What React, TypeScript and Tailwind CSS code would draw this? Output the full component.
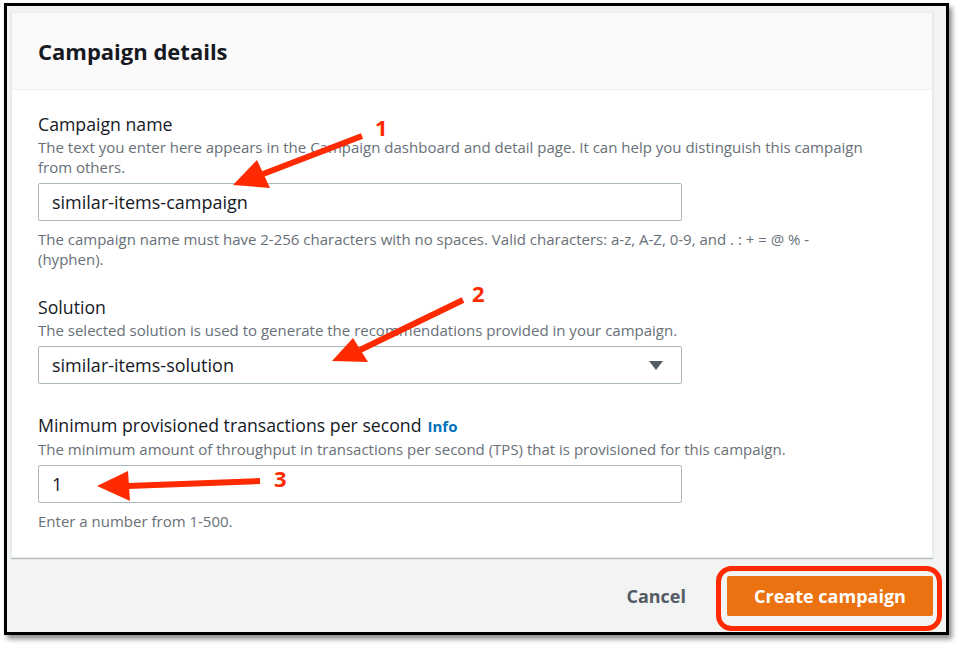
const font = { fontFamily: '"Open Sans", "Noto Sans", sans-serif' };

const Field = ({
  label,
  info,
  desc,
  children,
  hint,
}: {
  label: string;
  info?: boolean;
  desc: string;
  children: React.ReactNode;
  hint?: string;
}) => (
  <div>
    <div className="text-[17.7px] leading-[22px] text-[#16191f]">
      {label}
      {info && <span className="ml-[6px] text-[15px] font-bold text-[#0073bb]">Info</span>}
    </div>
    <p className="mt-[2px] w-[832px] text-[15px] leading-[20px] text-[#687078]">{desc}</p>
    <div className="mt-[6px]">{children}</div>
    {hint && <p className="mt-[8px] w-[832px] text-[15px] leading-[20px] text-[#687078]">{hint}</p>}
  </div>
);

const Input = ({ value, select }: { value: string; select?: boolean }) => (
  <div className="flex h-[38px] w-[644px] items-center justify-between rounded-[2px] border border-[#aab7b8] bg-white pl-[13px] pr-[18px]">
    <span className="text-[18px] text-[#16191f]">{value}</span>
    {select && (
      <svg width="14" height="9" viewBox="0 0 14 9">
        <path d="M0 0 H14 L7 9 Z" fill="#545b64" />
      </svg>
    )}
  </div>
);

export default function App() {
  return (
    <div className="relative h-[650px] w-[960px] bg-white" style={font}>
      {/* framed screenshot */}
      <div className="ml-[4px] mt-[3px] h-[632px] w-[945px] border-[3px] border-black bg-[#f2f3f3] pl-[4px] pt-[6px] shadow-[3px_4px_5px_rgba(0,0,0,0.45)]">
        <div className="w-[922px] border border-[#eaeded] bg-white shadow-[0_1px_1px_rgba(0,28,36,0.25)]">
          <div className="flex h-[77px] items-center border-b border-[#eaeded] bg-[#fafafa] pl-[26px]">
            <h2 className="text-[22px] font-bold text-[#16191f]">Campaign details</h2>
          </div>

          <div className="px-[26px] pb-[26px] pt-[23px]">
            <Field
              label="Campaign name"
              desc="The text you enter here appears in the Campaign dashboard and detail page. It can help you distinguish this campaign from others."
              hint="The campaign name must have 2-256 characters with no spaces. Valid characters: a-z, A-Z, 0-9, and . : + = @ % - (hyphen)."
            >
              <Input value="similar-items-campaign" />
            </Field>

            <div className="mt-[27px]">
              <Field
                label="Solution"
                desc="The selected solution is used to generate the recommendations provided in your campaign."
              >
                <Input value="similar-items-solution" select />
              </Field>
            </div>

            <div className="mt-[30px]">
              <Field
                label="Minimum provisioned transactions per second"
                info
                desc="The minimum amount of throughput in transactions per second (TPS) that is provisioned for this campaign."
                hint="Enter a number from 1-500."
              >
                <Input value="1" />
              </Field>
            </div>
          </div>
        </div>

        {/* footer actions */}
        <div className="flex w-[922px] items-center justify-end pt-[18px]">
          <button className="mr-[41px] text-[18px] font-bold text-[#545b64]">Cancel</button>
          <button className="h-[40px] w-[206px] rounded-[2px] bg-[#ec7211] text-[18px] font-bold text-white">
            Create campaign
          </button>
        </div>
      </div>

      {/* red annotations */}
      <svg className="pointer-events-none absolute left-0 top-0" width="960" height="650">
        <g stroke="#ff2a00" strokeWidth="6" strokeLinecap="butt" fill="#ff2a00">
          <line x1="362" y1="133" x2="263" y2="171" />
          <polygon points="233,182 257,157 270,185" stroke="none" />
          <line x1="463" y1="297" x2="360" y2="347" />
          <polygon points="332,358 353,335 368,359" stroke="none" />
          <line x1="260" y1="478" x2="128" y2="483" />
          <polygon points="97,483 128,468 130,498" stroke="none" />
        </g>
        <g fill="#ff2a00" fontSize="22" fontWeight="700" style={font}>
          <text x="375" y="133">1</text>
          <text x="472" y="299">2</text>
          <text x="274" y="484">3</text>
        </g>
        <rect x="718.5" y="565.5" width="221" height="60" rx="13" fill="none" stroke="#ff2a00" strokeWidth="5" />
      </svg>
    </div>
  );
}
